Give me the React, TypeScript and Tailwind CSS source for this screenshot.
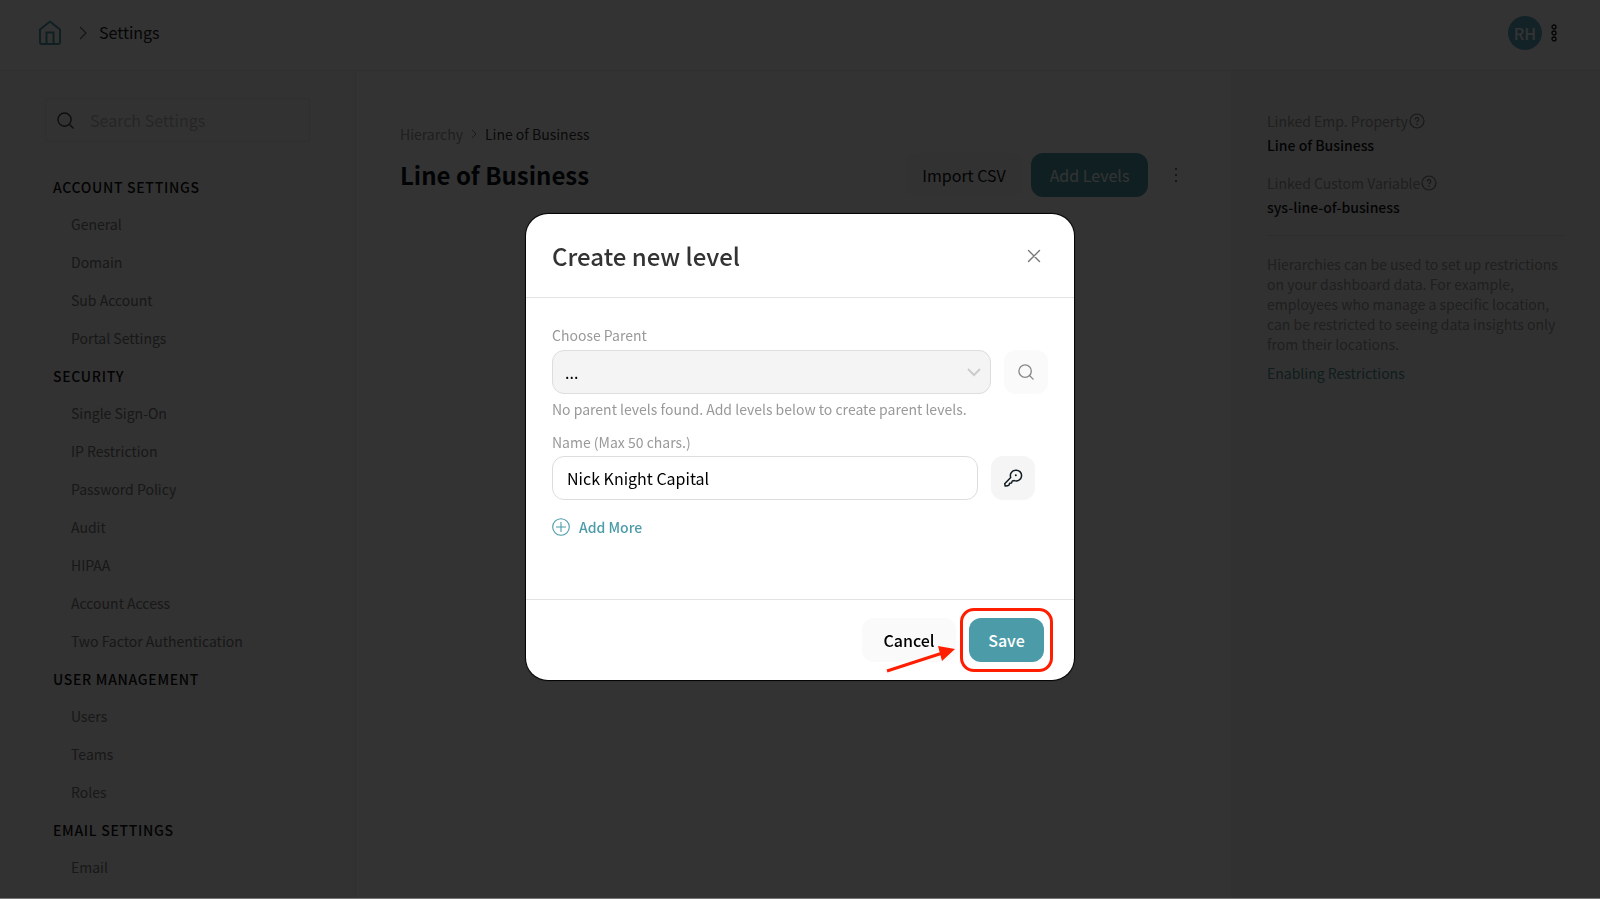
import { useState } from 'react';
import clsx from 'clsx';

const TEAL = '#4b9ba8';

const menu = [
  { title: 'Account Settings', items: ['General', 'Domain', 'Sub Account', 'Portal Settings'] },
  {
    title: 'Security',
    items: [
      'Single Sign-On',
      'IP Restriction',
      'Password Policy',
      'Audit',
      'HIPAA',
      'Account Access',
      'Two Factor Authentication',
    ],
  },
  { title: 'User Management', items: ['Users', 'Teams', 'Roles'] },
  { title: 'Email Settings', items: ['Email'] },
];

function HomeIcon() {
  return (
    <svg width="24" height="26" viewBox="0 0 24 26" fill="none" stroke={TEAL} strokeWidth="2" strokeLinejoin="round">
      <path d="M2 9.5 12 1.5l10 8V22a2 2 0 0 1-2 2H4a2 2 0 0 1-2-2z" />
      <path d="M8.5 24V12.5h7V24" strokeLinejoin="miter" />
    </svg>
  );
}

function SearchIcon({ size, className }: { size: number; className?: string }) {
  return (
    <svg width={size} height={size} viewBox="0 0 18 18" fill="none" stroke="currentColor" strokeWidth="1.5" className={className}>
      <circle cx="8" cy="8" r="7" />
      <path d="m13 13 4 4" strokeLinecap="round" />
    </svg>
  );
}

function HelpIcon() {
  return (
    <svg width="16" height="16" viewBox="0 0 16 16" fill="none" stroke="#777" strokeWidth="1.2">
      <circle cx="8" cy="8" r="7" />
      <path d="M6.2 6.4a1.8 1.8 0 1 1 2.7 1.5c-.6.3-.9.6-.9 1.3" />
      <circle cx="8" cy="11.2" r=".8" fill="#777" stroke="none" />
    </svg>
  );
}

function KeyIcon() {
  return (
    <svg width="20" height="20" viewBox="0 0 20 20" fill="none" stroke="#111b21" strokeWidth="1.5" strokeLinejoin="round" strokeLinecap="round">
      <path d="M12.4 2.2a5.4 5.4 0 1 1-1.1 10.4l-2 .4-.8 1.9-1.9.3-.4 1.7-1.6.9-2.4.2-.5-2.3 6-6.3a5.4 5.4 0 0 1 4.7-7.2z" />
      <circle cx="12.8" cy="7.3" r="1" fill="#111b21" stroke="none" />
    </svg>
  );
}

function Header() {
  return (
    <header className="flex h-[71px] items-center border-b border-[#e8e8e8] bg-white pr-[42px] pb-[5px] pl-[38px]">
      <a href="#home" aria-label="Home">
        <HomeIcon />
      </a>
      <svg width="8" height="14" viewBox="0 0 8 14" fill="none" stroke="#666" strokeWidth="1.2" className="ml-[17px]">
        <path d="m1 1 6 6-6 6" />
      </svg>
      <span className="ml-3 pb-px text-base leading-6 text-[#222]">Settings</span>
      <div className="ml-auto flex size-[34px] items-center justify-center rounded-full bg-[#5faac4] text-base font-medium text-white">
        RH
      </div>
      <button type="button" aria-label="More" className="ml-2">
        <svg width="8" height="18" viewBox="0 0 8 18" fill="none" stroke="#111" strokeWidth="1.3">
          <circle cx="4" cy="3" r="2" />
          <circle cx="4" cy="9" r="2" />
          <circle cx="4" cy="15" r="2" />
        </svg>
      </button>
    </header>
  );
}

function Sidebar() {
  return (
    <nav className="w-[356px] shrink-0 border-r border-[#eaeaea] bg-[#f7f7f7] pt-[27px] pl-[45px]">
      <label className="flex h-11 w-[265px] items-center rounded-sm border border-[#e8e8e8] bg-[#fbfbfb] pl-[11px]">
        <SearchIcon size={17} className="text-[#444]" />
        <input
          type="text"
          placeholder="Search Settings"
          aria-label="Search Settings"
          className="ml-4 w-48 text-base outline-none placeholder:text-[#bbb]"
        />
      </label>
      <div className="mt-[26px] pl-2">
        {menu.map((group) => (
          <div key={group.title}>
            <h3 className="flex h-[37px] items-center text-sm font-medium tracking-wider text-[#111] uppercase">{group.title}</h3>
            <ul>
              {group.items.map((item) => (
                <li key={item} className="flex h-[38px] items-center pl-[18px] text-sm text-[#777]">
                  <a href="#settings">{item}</a>
                </li>
              ))}
            </ul>
          </div>
        ))}
      </div>
    </nav>
  );
}

function Hierarchy() {
  return (
    <main className="flex-1 bg-white pt-[53px] pr-[53px] pl-11">
      <div className="flex items-center text-sm leading-5">
        <a href="#hierarchy" className="text-[#999]">Hierarchy</a>
        <svg width="6" height="8" viewBox="0 0 6 8" fill="none" stroke="#888" className="mx-2">
          <path d="m1 0 4 4-4 4" />
        </svg>
        <span className="text-[#333]">Line of Business</span>
      </div>
      <div className="mt-[9px] flex items-center">
        <h1 className="text-2xl font-bold text-[#0b1115]">Line of Business</h1>
        <button type="button" className="ml-auto h-11 w-[118px] rounded-xl bg-[#f8f8f8] text-base text-[#111]">
          Import CSV
        </button>
        <button type="button" className="ml-2 h-11 w-[117px] rounded-xl bg-[#4b9ba8] text-base text-white">
          Add Levels
        </button>
        <button type="button" aria-label="More actions" className="ml-[26px]">
          <svg width="4" height="16" viewBox="0 0 4 16" fill="#444">
            <circle cx="2" cy="2" r="1" />
            <circle cx="2" cy="8" r="1" />
            <circle cx="2" cy="14" r="1" />
          </svg>
        </button>
      </div>
    </main>
  );
}

function Details() {
  return (
    <aside className="w-[369px] shrink-0 bg-[#f5f5f5] pt-10 pr-9 pl-9 text-sm leading-5 text-[#999]">
      <dl>
        <dt className="flex items-center gap-px">
          Linked Emp. Property <HelpIcon />
        </dt>
        <dd className="mt-1 font-medium text-[#111]">Line of Business</dd>
        <dt className="mt-[18px] flex items-center gap-px">
          Linked Custom Variable <HelpIcon />
        </dt>
        <dd className="mt-1 font-medium text-[#111]">sys-line-of-business</dd>
      </dl>
      <hr className="mt-[18px] border-[#e2e2e2]" />
      <p className="mt-[18px]">
        Hierarchies can be used to set up restrictions on your dashboard data. For example, employees who manage a
        specific location, can be restricted to seeing data insights only from their locations.
      </p>
      <a href="#restrictions" className="mt-[9px] block text-[#4a9393]">Enabling Restrictions</a>
    </aside>
  );
}

function CreateLevelDialog() {
  const [name, setName] = useState('Nick Knight Capital');

  return (
    <div
      role="dialog"
      aria-labelledby="dialog-title"
      className="w-[548px] rounded-[22px] bg-white shadow-[0_0_1px_1px_#000]"
    >
      <div className="flex h-[84px] items-center justify-between border-b border-[#e3e3e3] pr-[33px] pl-[26px]">
        <h2 id="dialog-title" className="text-2xl font-medium text-[#333]">Create new level</h2>
        <button type="button" aria-label="Close">
          <svg width="14" height="14" viewBox="0 0 14 14" stroke="#777" strokeWidth="1.4" strokeLinecap="round">
            <path d="m1.5 1.5 11 11M12.5 1.5l-11 11" />
          </svg>
        </button>
      </div>

      <div className="h-[301px] px-[26px] pt-[27px] text-sm leading-5 text-[#999]">
        <label htmlFor="parent" className="block">Choose Parent</label>
        <div className="mt-[5px] flex gap-[13px]">
          <div className="relative flex-1">
            <select
              id="parent"
              disabled
              className="h-11 w-full appearance-none rounded-xl border border-[#ddd] bg-[#f4f4f4] px-3 text-base text-black opacity-100"
            >
              <option>...</option>
            </select>
            <svg
              width="14"
              height="9"
              viewBox="0 0 14 9"
              fill="none"
              stroke="#ccc"
              strokeWidth="2"
              className="pointer-events-none absolute top-[18px] right-[10px]"
            >
              <path d="m1 1 6 6 6-6" />
            </svg>
          </div>
          <button type="button" aria-label="Search parent" className="flex size-11 items-center justify-center rounded-xl bg-[#fafafa]">
            <SearchIcon size={16} className="text-[#888]" />
          </button>
        </div>
        <p className="mt-[5px]">No parent levels found. Add levels below to create parent levels.</p>

        <label htmlFor="name" className="mt-[13px] block">Name (Max 50 chars.)</label>
        <div className="mt-1 flex gap-[13px] pr-[13px]">
          <input
            id="name"
            type="text"
            maxLength={50}
            value={name}
            onChange={(e) => setName(e.target.value)}
            className="h-11 min-w-0 flex-1 rounded-xl border border-[#ddd] bg-white px-[14px] text-base text-black outline-none"
          />
          <button type="button" aria-label="Set key" className="flex size-11 items-center justify-center rounded-xl bg-[#f5f5f5]">
            <KeyIcon />
          </button>
        </div>

        <button type="button" className="mt-[17px] flex items-center gap-[9px] font-medium text-[#4b9ba8]">
          <svg width="18" height="18" viewBox="0 0 18 18" fill="none" stroke={TEAL} strokeWidth="1.1">
            <circle cx="9" cy="9" r="8.3" />
            <path d="M9 4v10M4 9h10" />
          </svg>
          Add More
        </button>
      </div>

      <div className="flex h-[81px] items-center justify-end gap-1 border-t border-[#e3e3e3] pr-[21px]">
        <DialogButton className="w-[94px] bg-[#fafafa] text-black">Cancel</DialogButton>
        <div className="relative rounded-[14px] border-3 border-[#ff1e00] px-[6px] py-[7px]">
          <DialogButton className="w-[75px] bg-[#4b9ba8] text-white">Save</DialogButton>
          <svg width="72" height="32" viewBox="0 0 72 32" className="pointer-events-none absolute right-[93px] -bottom-1.5">
            <path d="M2 28 56 10.5" stroke="#ff1e00" strokeWidth="3" />
            <path d="m53 3 17 3-13 12z" fill="#ff1e00" />
          </svg>
        </div>
      </div>
    </div>
  );
}

function DialogButton({ className, children }: { className: string; children: string }) {
  return (
    <button type="button" className={clsx('block h-11 rounded-xl text-base font-medium', className)}>
      {children}
    </button>
  );
}

export default function App() {
  return (
    <div className="flex min-h-screen flex-col border-b border-[#777] font-['Noto_Sans_CJK_SC',sans-serif]">
      <Header />
      <div className="flex flex-1">
        <Sidebar />
        <Hierarchy />
        <Details />
      </div>
      <div className="fixed inset-x-0 top-0 bottom-px flex items-center justify-center bg-black/80 pb-1">
        <CreateLevelDialog />
      </div>
    </div>
  );
}
